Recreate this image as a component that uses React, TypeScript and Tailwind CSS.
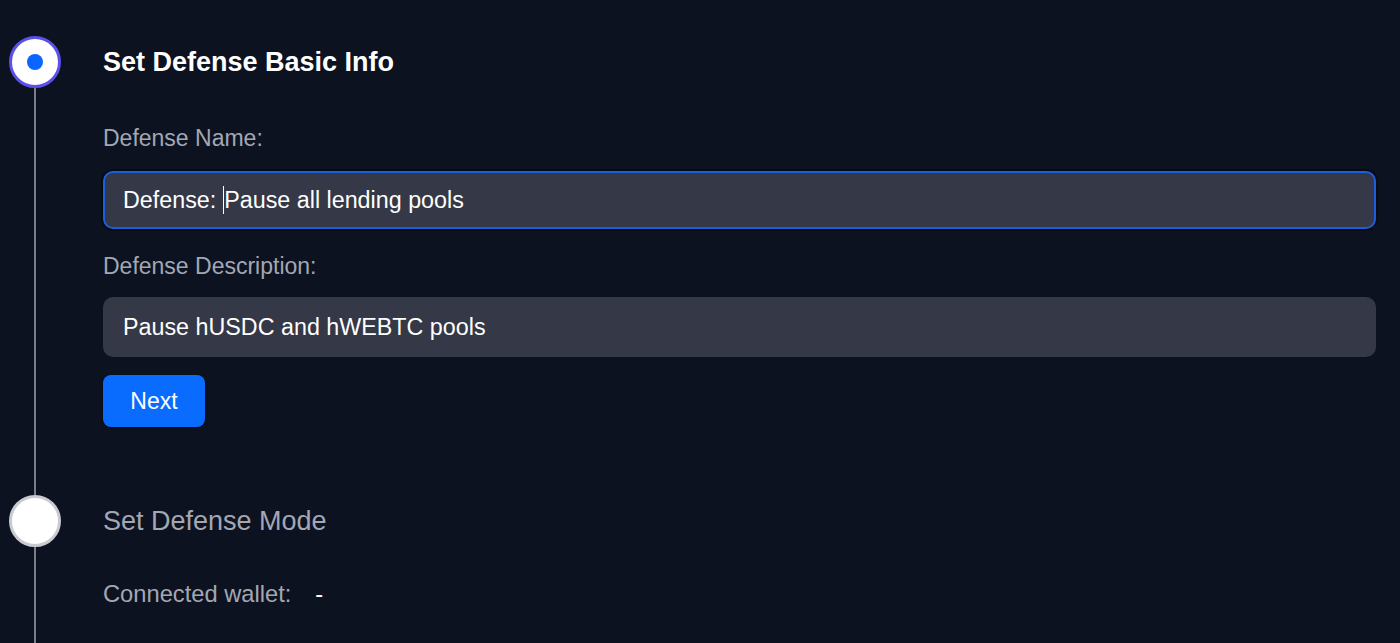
import React from 'react';

const font = { fontFamily: '"Liberation Sans", Arial, sans-serif' };

const Step: React.FC<{ active?: boolean; children: React.ReactNode }> = ({ active, children }) => (
  <div className="flex">
    <div className="flex w-[52px] shrink-0 flex-col items-center">
      {active ? (
        <div className="flex h-[52px] w-[52px] items-center justify-center rounded-full border-[3px] border-[#5a50ea] bg-white">
          <div className="h-[16px] w-[16px] rounded-full bg-[#0a66ff]" />
        </div>
      ) : (
        <div className="h-[52px] w-[52px] rounded-full border-[3px] border-[#c9cbd1] bg-white" />
      )}
      <div className="w-[2px] flex-1 bg-[#7b7e86]" />
    </div>
    <div className="ml-[42px] flex-1">{children}</div>
  </div>
);

export default function App() {
  return (
    <div className="h-[643px] w-full overflow-hidden bg-[#0c1220] pl-[9px] pr-[24px] pt-[36px]" style={font}>
      <Step active>
        <div className="pb-[68px]">
          <h2 className="text-[27px] font-bold leading-[52px] text-white">Set Defense Basic Info</h2>
          <label className="mt-[33px] block text-[23px] leading-[34px] text-[#a3a7b3]">Defense Name:</label>
          <div className="mt-[16px] flex h-[58px] items-center rounded-[10px] border-2 border-[#1a5fe0] bg-[#353846] px-[18px] text-[23.3px] text-white shadow-[0_0_0_2px_rgba(0,0,0,0.35)]">
            <span>Defense:&nbsp;</span>
            <span className="h-[28px] w-[1.5px] bg-white" />
            <span>Pause all lending pools</span>
          </div>
          <label className="mt-[20px] block text-[23px] leading-[34px] text-[#a3a7b3]">Defense Description:</label>
          <div className="mt-[14px] flex h-[60px] items-center rounded-[10px] bg-[#353846] px-[20px] text-[23.3px] text-white">
            Pause hUSDC and hWEBTC pools
          </div>
          <button className="mt-[18px] h-[52px] w-[102px] rounded-[8px] bg-[#0a6cff] text-[23px] text-white shadow-[0_1px_3px_rgba(0,0,0,0.6)]">
            Next
          </button>
        </div>
      </Step>
      <Step>
        <div className="pb-[40px]">
          <h2 className="text-[27px] leading-[52px] text-[#a3a7b3]">Set Defense Mode</h2>
          <div className="mt-[30px] flex text-[23.7px] leading-[34px]">
            <span className="text-[#a3a7b3]">Connected wallet:</span>
            <span className="ml-[24px] text-white">-</span>
          </div>
        </div>
      </Step>
    </div>
  );
}
